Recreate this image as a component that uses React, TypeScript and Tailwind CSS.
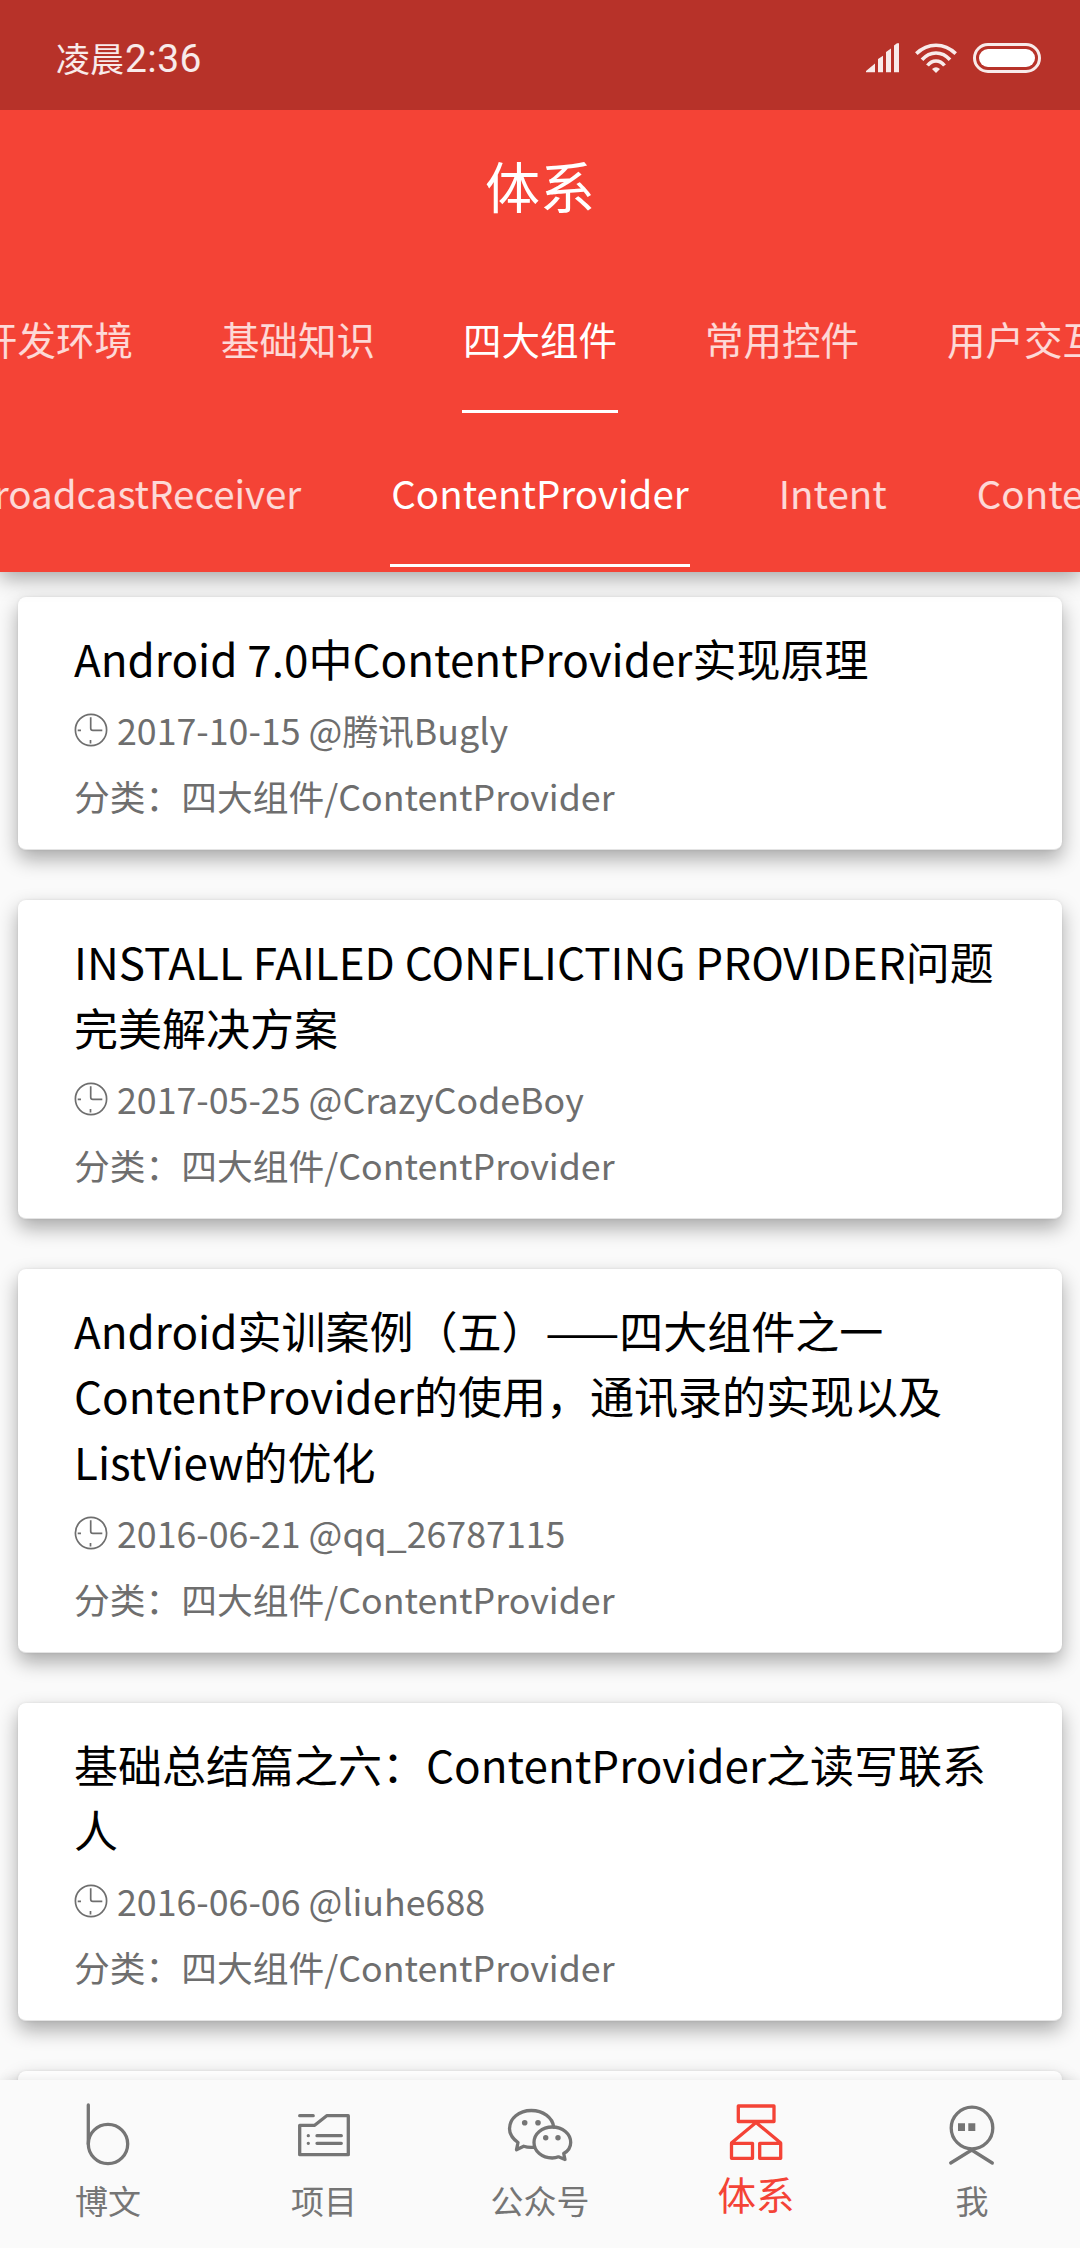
import type { ReactNode } from "react";

type Post = { title: string; date: string; author: string };

const posts: Post[] = [
  { title: "Android 7.0中ContentProvider实现原理", date: "2017-10-15", author: "腾讯Bugly" },
  { title: "INSTALL FAILED CONFLICTING PROVIDER问题完美解决方案", date: "2017-05-25", author: "CrazyCodeBoy" },
  { title: "Android实训案例（五）——四大组件之一ContentProvider的使用，通讯录的实现以及ListView的优化", date: "2016-06-21", author: "qq_26787115" },
  { title: "基础总结篇之六：ContentProvider之读写联系人", date: "2016-06-06", author: "liuhe688" },
];

function StatusBar() {
  return (
    <div className="flex h-[110px] items-center justify-between bg-[#b73229] pt-[7px] pr-[39px] pl-14 text-white/90">
      <div className="flex items-baseline">
        <span className="text-[34px] leading-[44px]">凌晨</span>
        <span className="pl-px font-[Roboto] text-[39px] leading-[44px] tracking-[0.4px]">2:36</span>
      </div>
      <div className="flex items-center gap-4 pb-px">
        <svg className="h-[30px] w-[33px]" viewBox="0 0 33 30" fill="currentColor">
          <path d="M0 29.3V28L9 20.5V29.3Z M12 16l5-3.2V29.3H12Z M20 9l5-3.4V29.3H20Z M28 2.5L31 .3h2V29.3H28Z" />
        </svg>
        <svg className="h-[30px] w-[42px]" viewBox="0 0 42 30" fill="none" stroke="currentColor" strokeWidth="3.6">
          <path d="M1.3 10.6Q10 2.2 21 2.2T40.700 10.600" />
          <path d="M7 16.800Q13 10 21 10T35 16.800" />
          <path d="M12.500 22.500Q16 18 21 18T29.500 22.500" />
          <path d="M17 26q4-3.500 8 0l-4 4Z" fill="currentColor" stroke="none" />
        </svg>
        <div className="h-[30px] w-[68px] rounded-full border-3 border-current p-[3px]">
          <div className="h-full rounded-full bg-white" />
        </div>
      </div>
    </div>
  );
}

function Tab({ label, active = false }: { label: string; active?: boolean }) {
  return (
    <div className="relative flex h-full shrink-0 items-center pb-[5px] text-[38.5px] whitespace-nowrap">
      <span className={active ? "text-white" : "text-white/80"}>{label}</span>
      {active && <span className="absolute -inset-x-px bottom-[5px] h-[3px] bg-white" />}
    </div>
  );
}

function TabRow({ before, active, after, wide = false }: { before: string[]; active: string; after: string[]; wide?: boolean }) {
  const gap = wide ? "gap-[90px]" : "gap-[88px]";
  return (
    <div className={`grid h-[154px] grid-cols-[minmax(0,1fr)_auto_minmax(0,1fr)] ${gap}`}>
      <div className={`flex justify-end ${gap}`}>
        {before.map((t) => <Tab key={t} label={t} />)}
      </div>
      <Tab label={active} active />
      <div className={`flex ${gap}`}>
        {after.map((t) => <Tab key={t} label={t} />)}
      </div>
    </div>
  );
}

function Clock() {
  return (
    <svg className="h-[34px] w-[34px] shrink-0" viewBox="0 0 34 34" fill="none" stroke="currentColor" strokeWidth="1.7">
      <circle cx="17" cy="17" r="15.600" />
      <path d="M16.700 4.300V15.200q0 2.200 2.200 2.200H28.300M3.700 17.400H7M16.500 27v3.400" />
    </svg>
  );
}

function PostCard({ post }: { post: Post }) {
  return (
    <article className="shrink-0 rounded-lg border-b border-[#e4e4e4] bg-white px-14 pt-[29px] pb-5 shadow-[0_9px_20px_rgba(0,0,0,0.33),0_0_3px_rgba(0,0,0,0.08)]">
      <h2 className="text-[44px] leading-[65.5px] text-black">{post.title}</h2>
      <div className="mt-[5.5px] flex h-[66px] items-center gap-[9px] text-[35.75px] text-[#6e6e6e]">
        <Clock />
        <span>{post.date} @{post.author}</span>
      </div>
      <div className="h-[66px] text-[35.75px] leading-[66px] text-[#6e6e6e]">分类：四大组件/ContentProvider</div>
    </article>
  );
}

function NavItem({ label, active = false, children }: { label: string; active?: boolean; children: ReactNode }) {
  return (
    <div className={active ? "flex flex-1 flex-col items-center text-[#f44336]" : "flex flex-1 flex-col items-center text-[#757575]"}>
      <svg className="h-[72px] w-[72px]" viewBox="0 0 72 72" fill="none" stroke="currentColor" strokeWidth="3.3" strokeLinecap="round" strokeLinejoin="round">
        {children}
      </svg>
      <span className={active ? "-mt-[3px] text-[38.5px] leading-[52px]" : "pt-1 text-[33px] leading-[52px]"}>{label}</span>
    </div>
  );
}

function BottomNav() {
  return (
    <nav className="relative flex h-[168px] shrink-0 bg-[#fafafa] pt-[18px] shadow-[0_0_12px_rgba(0,0,0,0.1)]">
      <NavItem label="博文">
        <path d="M16.300 7V46" />
        <circle cx="36" cy="46" r="19.700" />
      </NavItem>
      <NavItem label="项目">
        <path d="M11.700 17.700H25.200M11.700 27.300H26.700L38.700 17.700H60.300V56.700H11.700ZM29 37.700H53.300M29 45.300H53.300" />
        <path d="M20.300 37.700h.01M20.300 45.300h.01" />
      </NavItem>
      <NavItem label="公众号">
        <path d="M29.500 49.300Q24 49.700 19.700 48.200L12.500 51.700L14 44.500C8.500 40.500 5.500 36 5.500 30.800C5.500 20.500 15 12.500 27.300 12.500C39 12.500 48.500 19.500 49.700 29" />
        <path d="M59.700 55.500L61 61.500L54.500 58.800C52.500 59.600 50.500 60 48.200 60C38 60 30 53.200 30 44.400S38 29 48.300 29S66.700 35.600 66.700 44.400C66.700 49 64 53 59.700 55.500Z" />
        <g fill="currentColor" stroke="none">
          <circle cx="20.700" cy="24.700" r="2.800" />
          <circle cx="34" cy="24.700" r="2.800" />
          <circle cx="41.700" cy="39.700" r="2.700" />
          <circle cx="54" cy="39.700" r="2.700" />
        </g>
      </NavItem>
      <NavItem label="体系" active>
        <path d="M18.300 8H54V23.500H18.300ZM11.500 45.300H32.500V60.300H11.500ZM39.700 45.300H60.700V60.300H39.700ZM11.700 44.700L36 24.500L60.500 44.700" />
      </NavItem>
      <NavItem label="我">
        <circle cx="36" cy="30" r="20.800" />
        <path d="M14.700 65L35.700 52L56.300 65" />
        <path d="M22 25.300h7V33h-7ZM32.300 25.300h7V33h-7Z" fill="currentColor" stroke="none" />
      </NavItem>
    </nav>
  );
}

export default function App() {
  return (
    <div className="flex h-[2248px] w-[1080px] flex-col overflow-hidden bg-[#fafafa] font-['Noto_Sans_CJK_SC',sans-serif]">
      <header className="relative z-10 h-[572px] shrink-0 bg-[#f44336] shadow-[0_6px_20px_rgba(0,0,0,0.35)]">
        <StatusBar />
        <div className="flex h-[154px] items-center justify-center pb-[5px] text-[55px] text-white">体系</div>
        <div className="overflow-hidden">
          <TabRow before={["开发环境", "基础知识"]} active="四大组件" after={["常用控件", "用户交互"]} />
          <TabRow before={["BroadcastReceiver"]} active="ContentProvider" after={["Intent", "ContentResolver"]} wide />
        </div>
      </header>
      <main className="flex min-h-0 flex-1 flex-col gap-[50px] overflow-hidden px-[18px] pt-[25px]">
        {posts.map((p) => <PostCard key={p.title} post={p} />)}
        <article className="h-[253px] shrink-0 rounded-lg bg-white shadow-[0_9px_20px_rgba(0,0,0,0.33),0_0_3px_rgba(0,0,0,0.08)]" />
      </main>
      <BottomNav />
    </div>
  );
}
